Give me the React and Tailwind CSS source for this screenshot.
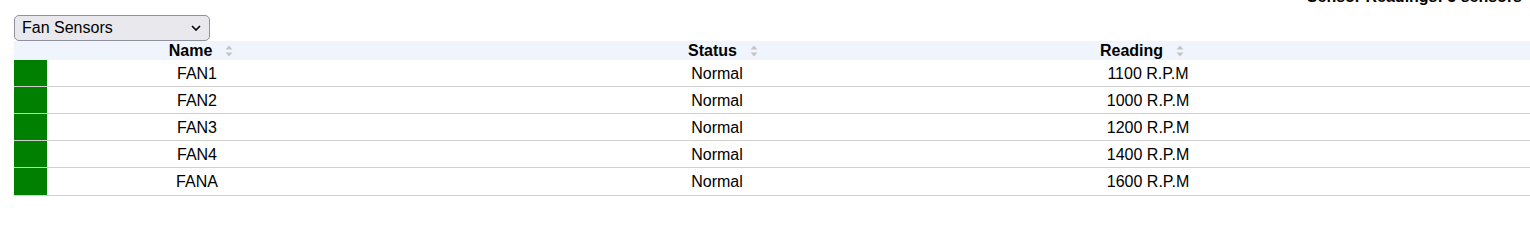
import { useState } from 'react';

const fans = [
  { name: 'FAN1', status: 'Normal', reading: '1100 R.P.M' },
  { name: 'FAN2', status: 'Normal', reading: '1000 R.P.M' },
  { name: 'FAN3', status: 'Normal', reading: '1200 R.P.M' },
  { name: 'FAN4', status: 'Normal', reading: '1400 R.P.M' },
  { name: 'FANA', status: 'Normal', reading: '1600 R.P.M' },
];

function SortIcon() {
  return (
    <svg width="8" height="12" viewBox="0 0 8 12" className="ml-[13px] shrink-0">
      <path d="M0.5 4.5 L4 0.5 L7.5 4.5 Z" fill="#c4c4c4" />
      <path d="M0.5 7.5 L4 11.5 L7.5 7.5 Z" fill="#c4c4c4" />
    </svg>
  );
}

function HeadCell({ label, className = '' }) {
  return (
    <div className={`flex items-center justify-center font-bold ${className}`}>
      <span>{label}</span>
      <SortIcon />
    </div>
  );
}

export default function App() {
  const [group, setGroup] = useState('fan');

  return (
    <div className="min-h-screen bg-white pl-[14px] text-[16px] text-black font-['Liberation_Sans',Arial,sans-serif]">
      {/* Summary line, mostly scrolled out of view */}
      <div className="flex justify-end pr-2 -mt-[12px] font-bold leading-[18px]">
        Sensor Readings: 5 sensors
      </div>

      {/* Sensor group picker */}
      <div className="relative mt-[9px] w-[196px]">
        <select
          value={group}
          onChange={(e) => setGroup(e.target.value)}
          className="block w-full h-[26px] appearance-none rounded-[5px] border border-[#8f8f9d] bg-[#e9e9ed] pl-[7px] pr-6 leading-[24px]"
        >
          <option value="fan">Fan Sensors</option>
          <option value="temp">Temperature Sensors</option>
          <option value="volt">Voltage Sensors</option>
        </select>
        <svg
          width="10"
          height="6"
          viewBox="0 0 10 6"
          className="pointer-events-none absolute right-[9px] top-[10px]"
        >
          <path d="M1 1 L5 5 L9 1" fill="none" stroke="#000" strokeWidth="1.6" />
        </svg>
      </div>

      {/* Readings table */}
      <div className="grid grid-cols-[33px_300px_740px_122px_1fr]">
        <div className="col-span-5 grid grid-cols-subgrid h-[19px] bg-[#f0f5fd] leading-[19px]">
          <div />
          <HeadCell label="Name" className="pl-[8px]" />
          <HeadCell label="Status" className="pl-[12px]" />
          <HeadCell label="Reading" className="pr-[12px]" />
          <div />
        </div>

        {fans.map((f, i) => (
          <div
            key={f.name}
            className={`col-span-5 grid grid-cols-subgrid border-b border-[#d0d0d0] ${i === fans.length - 1 ? 'h-[28px]' : 'h-[27px]'}`}
          >
            <div className="bg-[#008000]" />
            <div className="text-center pt-[1px] leading-[25px]">{f.name}</div>
            <div className="text-center pt-[1px] leading-[25px]">{f.status}</div>
            <div className="text-center pt-[1px] leading-[25px]">{f.reading}</div>
            <div />
          </div>
        ))}
      </div>
    </div>
  );
}
